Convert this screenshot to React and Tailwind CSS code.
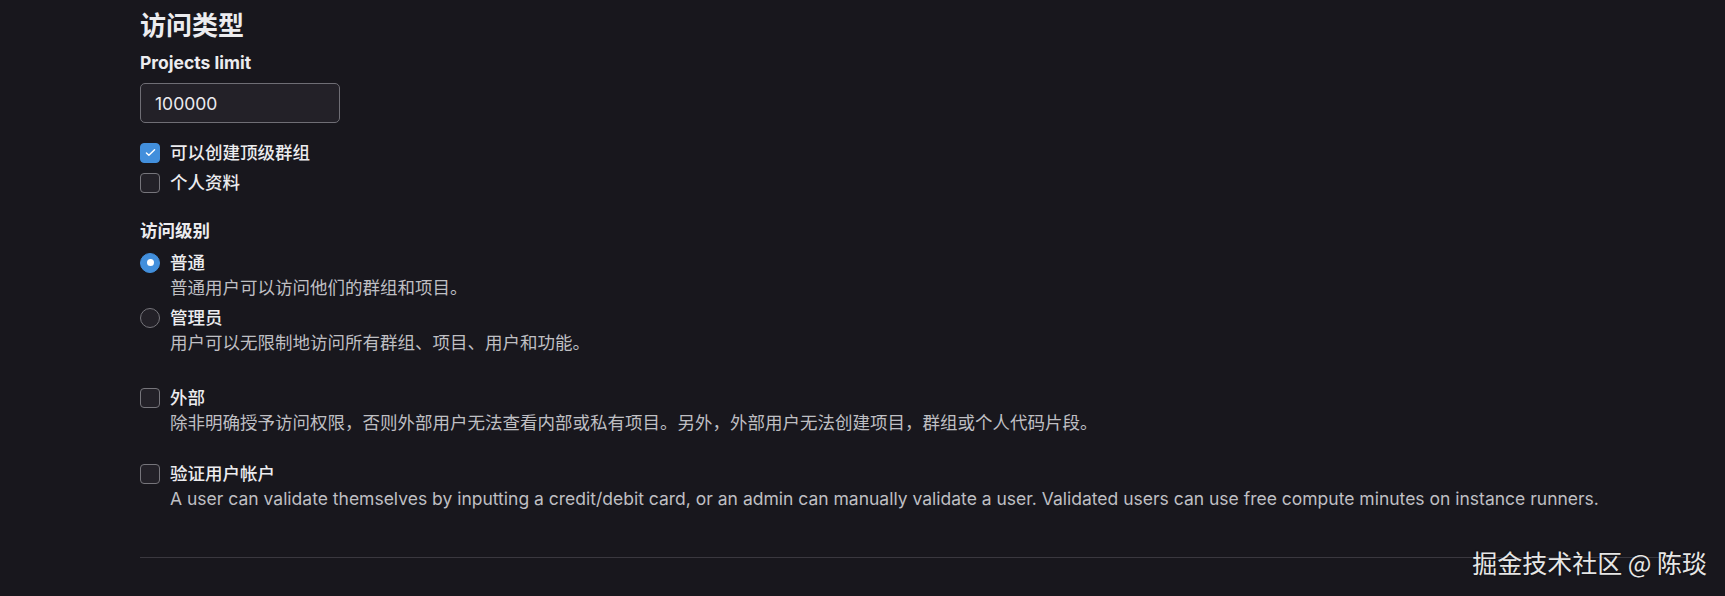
import React, { useState } from "react";

function CheckBox({ checked, onChange }) {
  return (
    <button
      type="button"
      onClick={onChange}
      className={
        "mt-[2.5px] h-5 w-5 shrink-0 rounded-[4px] border flex items-center justify-center " +
        (checked ? "bg-[#428fdc] border-[#428fdc]" : "bg-[#232128] border-[#76757b]")
      }
    >
      {checked && (
        <svg viewBox="0 0 16 16" className="h-[13px] w-[13px]" fill="none">
          <path d="M3 8.5l3 3 7-7" stroke="white" strokeWidth="1.8" strokeLinecap="round" strokeLinejoin="round" />
        </svg>
      )}
    </button>
  );
}

function Radio({ checked, onChange }) {
  return (
    <button
      type="button"
      onClick={onChange}
      className={
        "mt-[2.5px] h-5 w-5 shrink-0 rounded-full border flex items-center justify-center " +
        (checked ? "bg-[#428fdc] border-[#428fdc]" : "bg-[#232128] border-[#76757b]")
      }
    >
      {checked && <span className="h-[7px] w-[7px] rounded-full bg-white" />}
    </button>
  );
}

function Option({ control, label, help }) {
  return (
    <div className="flex gap-[10px]">
      {control}
      <div>
        <div className="font-medium text-[#ececef]">{label}</div>
        {help && <div className="text-[#bfbfc3]">{help}</div>}
      </div>
    </div>
  );
}

export default function App() {
  const [topGroups, setTopGroups] = useState(true);
  const [privateProfile, setPrivateProfile] = useState(false);
  const [level, setLevel] = useState("regular");
  const [external, setExternal] = useState(false);
  const [validated, setValidated] = useState(false);

  return (
    <div className="relative min-h-[596px] bg-[#18171d] font-['Inter','Noto_Sans_CJK_SC',sans-serif] text-[17.5px] leading-[25px] text-[#ececef] overflow-hidden">
      <div className="ml-[140px] w-[1545px] pt-[10px]">
        <h2 className="text-[26px] leading-[32px] font-bold">访问类型</h2>

        <label className="block mt-[8px] font-bold">Projects limit</label>
        <input
          defaultValue="100000"
          className="mt-[8px] block h-10 w-[200px] rounded-[5px] border border-[#6f6e75] bg-[#232128] px-[14px] text-[17.5px] text-[#ececef] outline-none"
        />

        <div className="mt-[17px]">
          <Option
            control={<CheckBox checked={topGroups} onChange={() => setTopGroups(!topGroups)} />}
            label="可以创建顶级群组"
          />
        </div>
        <div className="mt-[5px]">
          <Option
            control={<CheckBox checked={privateProfile} onChange={() => setPrivateProfile(!privateProfile)} />}
            label="个人资料"
          />
        </div>

        <div className="mt-[23px] font-bold">访问级别</div>
        <div className="mt-[7px]">
          <Option
            control={<Radio checked={level === "regular"} onChange={() => setLevel("regular")} />}
            label="普通"
            help="普通用户可以访问他们的群组和项目。"
          />
        </div>
        <div className="mt-[5px]">
          <Option
            control={<Radio checked={level === "admin"} onChange={() => setLevel("admin")} />}
            label="管理员"
            help="用户可以无限制地访问所有群组、项目、用户和功能。"
          />
        </div>

        <div className="mt-[30px]">
          <Option
            control={<CheckBox checked={external} onChange={() => setExternal(!external)} />}
            label="外部"
            help="除非明确授予访问权限，否则外部用户无法查看内部或私有项目。另外，外部用户无法创建项目，群组或个人代码片段。"
          />
        </div>
        <div className="mt-[26px]">
          <Option
            control={<CheckBox checked={validated} onChange={() => setValidated(!validated)} />}
            label="验证用户帐户"
            help="A user can validate themselves by inputting a credit/debit card, or an admin can manually validate a user. Validated users can use free compute minutes on instance runners."
          />
        </div>

        <hr className="mt-[46px] border-t border-[#3a383f]" />
      </div>

      <div className="absolute right-[18px] top-[550px] text-[25px] leading-none text-[#e6e6e6] font-['Noto_Sans_CJK_SC',sans-serif] [text-shadow:0_0_2px_rgba(0,0,0,0.6)]">
        掘金技术社区 @ 陈琰
      </div>
    </div>
  );
}
